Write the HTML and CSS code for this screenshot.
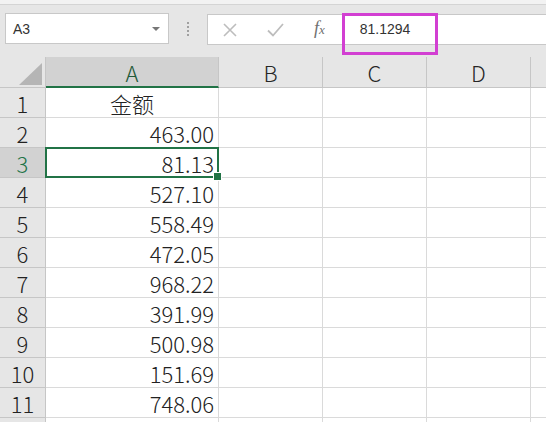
FILE: index.html
```html
<!DOCTYPE html>
<html lang="zh">
<head>
<meta charset="utf-8">
<link rel="stylesheet" href="styles.css">
</head>
<body>
<div class="top">
  <div class="strip"></div>
  <div class="fbar">
    <div class="namebox"><span class="ref">A3</span><span class="arrow"></span></div>
    <div class="grip"><i></i><i></i><i></i><i></i></div>
    <div class="formula">
      <svg class="ico xi" width="16" height="14" viewBox="0 0 16 14"><path d="M2 1 L14 13 M14 1 L2 13" stroke="#bdbdbd" stroke-width="1.6" fill="none"/></svg>
      <svg class="ico ck" width="17" height="14" viewBox="0 0 17 14"><path d="M1 7.5 L6 12.5 L16 1" stroke="#bdbdbd" stroke-width="1.8" fill="none"/></svg>
      <span class="fx">f<span class="fxx">x</span></span>
      <div class="value">81.1294<span class="hl"></span></div>
    </div>
  </div>
</div>
<div class="sheet">
  <div class="c corner"><span class="tri"></span></div>
  <div class="c ch sel">A</div>
  <div class="c ch">B</div>
  <div class="c ch">C</div>
  <div class="c ch">D</div>
  <div class="c ch last"></div>

  <div class="c rh">1</div><div class="c d mid">金额</div><div class="c"></div><div class="c"></div><div class="c"></div><div class="c last"></div>
  <div class="c rh">2</div><div class="c d">463.00</div><div class="c"></div><div class="c"></div><div class="c"></div><div class="c last"></div>
  <div class="c rh rsel">3</div><div class="c d active">81.13</div><div class="c"></div><div class="c"></div><div class="c"></div><div class="c last"></div>
  <div class="c rh">4</div><div class="c d">527.10</div><div class="c"></div><div class="c"></div><div class="c"></div><div class="c last"></div>
  <div class="c rh">5</div><div class="c d">558.49</div><div class="c"></div><div class="c"></div><div class="c"></div><div class="c last"></div>
  <div class="c rh">6</div><div class="c d">472.05</div><div class="c"></div><div class="c"></div><div class="c"></div><div class="c last"></div>
  <div class="c rh">7</div><div class="c d">968.22</div><div class="c"></div><div class="c"></div><div class="c"></div><div class="c last"></div>
  <div class="c rh">8</div><div class="c d">391.99</div><div class="c"></div><div class="c"></div><div class="c"></div><div class="c last"></div>
  <div class="c rh">9</div><div class="c d">500.98</div><div class="c"></div><div class="c"></div><div class="c"></div><div class="c last"></div>
  <div class="c rh">10</div><div class="c d">151.69</div><div class="c"></div><div class="c"></div><div class="c"></div><div class="c last"></div>
  <div class="c rh">11</div><div class="c d">748.06</div><div class="c"></div><div class="c"></div><div class="c"></div><div class="c last"></div>
  <div class="c rh"></div><div class="c d"></div><div class="c"></div><div class="c"></div><div class="c"></div><div class="c last"></div>
</div>
</body>
</html>
```

FILE: styles.css
```css
* { box-sizing: border-box; }
html, body { margin: 0; padding: 0; }
html { height: 422px; overflow: hidden; }
body {
  width: 546px;
  height: 422px;
  overflow: hidden;
  background: #ffffff;
  font-family: "Noto Sans CJK SC", "Noto Sans", sans-serif;
  color: #222;
}
.top {
  background: #e6e6e6;
  height: 57px;
}
.strip {
  height: 5px;
  background: #f2f2f2;
  border-bottom: 1px solid #d4d4d4;
}
.fbar {
  display: flex;
  align-items: flex-start;
  padding-top: 8px;
}
.namebox {
  margin-left: 5px;
  width: 164px;
  height: 31px;
  background: #fff;
  border: 1px solid #c8c8c8;
  display: flex;
  align-items: center;
  justify-content: space-between;
  padding: 0 8px 0 7px;
}
.ref {
  font-family: "Liberation Sans", sans-serif;
  font-size: 14px;
  color: #333;
}
.arrow {
  width: 0;
  height: 0;
  border-left: 4px solid transparent;
  border-right: 4px solid transparent;
  border-top: 4px solid #777;
  margin-top: 1px;
}
.grip {
  width: 38px;
  height: 31px;
  display: flex;
  flex-direction: column;
  align-items: center;
  justify-content: center;
  gap: 2px;
}
.grip i {
  width: 2px;
  height: 2px;
  background: #a0a0a0;
}
.formula {
  flex: 1;
  height: 31px;
  margin-top: 1px;
  background: #fff;
  border: 1px solid #c8c8c8;
  border-right: none;
  display: flex;
  align-items: center;
}
.ico { display: block; }
.xi { margin-left: 14px; }
.ck { margin-left: 29px; }
.fx {
  margin-left: 30px;
  font-family: "Liberation Serif", serif;
  font-style: italic;
  font-size: 18px;
  color: #707070;
  margin-top: -3px;
}
.fxx { font-size: 13px; }
.value {
  position: relative;
  margin-left: 35px;
  font-family: "Liberation Sans", sans-serif;
  font-size: 14px;
  color: #333;
  margin-top: -1px;
}
.hl {
  position: absolute;
  left: -18px;
  top: -8px;
  width: 96px;
  height: 42px;
  border: 3px solid #d23fd2;
}
.sheet {
  display: grid;
  grid-template-columns: 46px 173px 104px 104px 104px 15px;
  grid-template-rows: 31px repeat(12, 30px);
  height: 365px;
  overflow: hidden;
}
.c {
  border-right: 1px solid #dadada;
  border-bottom: 1px solid #dadada;
  background: #fff;
  font-size: 22px;
  font-weight: 300;
  line-height: 30px;
}
.last { border-right: none; }
.corner {
  background: #e6e6e6;
  border-right: 1px solid #c6c6c6;
  border-bottom: 1px solid #c6c6c6;
  display: flex;
  align-items: flex-end;
  justify-content: flex-end;
  padding: 0 3px 2px 0;
}
.tri {
  width: 0;
  height: 0;
  border-left: 23px solid transparent;
  border-bottom: 22px solid #b5b5b5;
}
.ch {
  background: #e6e6e6;
  border-right: 1px solid #c6c6c6;
  border-bottom: 1px solid #c6c6c6;
  text-align: center;
  color: #262626;
  line-height: 31px;
}
.ch.last { border-right: none; }
.ch.sel {
  background: #d2d2d2;
  color: #1f5a39;
  border-bottom: 2px solid #217346;
  line-height: 30px;
}
.rh {
  background: #e6e6e6;
  border-right: 1px solid #c6c6c6;
  border-bottom: 1px solid #c6c6c6;
  text-align: center;
  color: #222;
}
.rh.rsel {
  background: #d2d2d2;
  color: #217346;
}
.d {
  text-align: right;
  padding-right: 4px;
}
.d.mid { text-align: center; padding-right: 0; }
.active { position: relative; }
.active::after {
  content: "";
  position: absolute;
  left: -1px;
  top: -1px;
  right: -1px;
  bottom: -1px;
  border: 2px solid #217346;
}
.active::before {
  content: "";
  position: absolute;
  right: -4px;
  bottom: -4px;
  width: 7px;
  height: 7px;
  background: #217346;
  border: 1px solid #fff;
  z-index: 2;
}
```
